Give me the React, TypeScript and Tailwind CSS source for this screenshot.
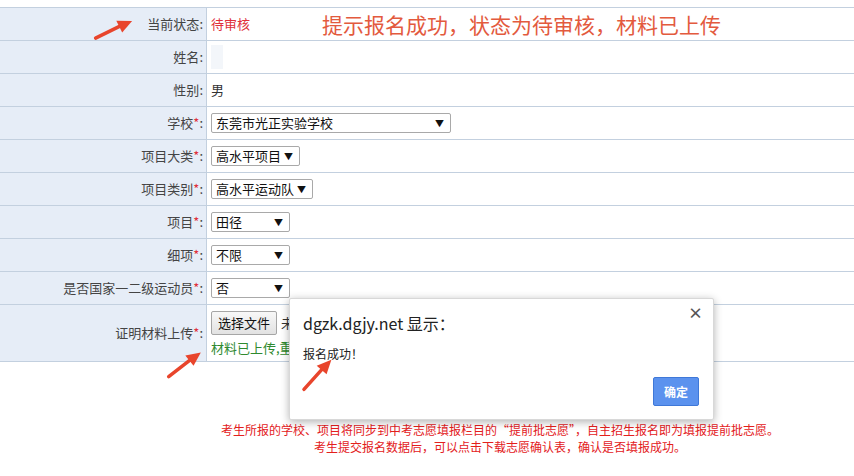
import React from "react";

const font = { fontFamily: '"Noto Sans CJK SC", "Noto Sans", sans-serif' };

function Arrow({ className, rotate }: { className: string; rotate: number }) {
  return (
    <svg className={className} viewBox="0 0 44 20" width="44" height="20" style={{ transform: `rotate(${rotate}deg)` }}>
      <path d="M2 12 L30 8" stroke="#e8452c" strokeWidth="3.5" strokeLinecap="round" fill="none" />
      <path d="M27 2 L42 7 L29 15 Z" fill="#e8452c" />
    </svg>
  );
}

function Select({ w, text }: { w: string; text: string }) {
  return (
    <div className={`${w} h-[20px] border border-[#a9a9a9] rounded-[2px] bg-white flex items-center justify-between pl-[4px] pr-[6px] text-[13px] text-[#111]`}>
      <span>{text}</span>
      <span className="text-[9px] leading-none">▼</span>
    </div>
  );
}

function Row({ label, req, children, h = "h-[33px]" }: { label: string; req?: boolean; children?: React.ReactNode; h?: string }) {
  return (
    <div className={`grid grid-cols-[207px_1fr] ${h} border-b border-[#c3d0df]`}>
      <div className="bg-[#e6edf7] border-r border-[#c3d0df] flex items-center justify-end pr-[3px] text-[13px] text-[#444]">
        {label}
        {req && <span className="text-[#e0303a]">*</span>}
        <span>:</span>
      </div>
      <div className="flex items-center pl-[4px] bg-white">{children}</div>
    </div>
  );
}

export default function App() {
  return (
    <div className="relative w-[854px] h-[476px] bg-white overflow-hidden" style={font}>
      <div className="pt-[7px]">
        <div className="border-t border-[#c3d0df]">
          <Row label="当前状态">
            <span className="text-[13px] text-[#e0303a]">待审核</span>
            <span className="ml-[72px] text-[21px] text-[#e35a3e] leading-none whitespace-nowrap">提示报名成功，状态为待审核，材料已上传</span>
          </Row>
          <Row label="姓名">
            <div className="w-[12px] h-[24px] bg-[#f3f6fa]" />
          </Row>
          <Row label="性别">
            <span className="text-[13px] text-[#333]">男</span>
          </Row>
          <Row label="学校" req>
            <Select w="w-[240px]" text="东莞市光正实验学校" />
          </Row>
          <Row label="项目大类" req>
            <Select w="w-[89px]" text="高水平项目" />
          </Row>
          <Row label="项目类别" req>
            <Select w="w-[102px]" text="高水平运动队" />
          </Row>
          <Row label="项目" req>
            <Select w="w-[79px]" text="田径" />
          </Row>
          <Row label="细项" req>
            <Select w="w-[79px]" text="不限" />
          </Row>
          <Row label="是否国家一二级运动员" req>
            <Select w="w-[79px]" text="否" />
          </Row>
          <Row label="证明材料上传" req h="h-[57px]">
            <div className="w-[80px] overflow-hidden whitespace-nowrap flex flex-col gap-[3px] pt-[2px]">
              <div className="flex items-center gap-[4px]">
                <div className="shrink-0 h-[24px] px-[6px] border border-[#a6a6a6] rounded-[2px] bg-gradient-to-b from-[#f8f8f8] to-[#e2e2e2] flex items-center text-[13px] text-[#111]">选择文件</div>
                <span className="text-[13px] text-[#333]">未选择任何文件</span>
              </div>
              <span className="text-[13px] text-[#2f8a2f]">材料已上传,重新上传将覆盖</span>
            </div>
          </Row>
        </div>
        <div className="pl-[146px] pt-[59px] text-center text-[12px] leading-[17px] text-[#e3201c]">
          <div>考生所报的学校、项目将同步到中考志愿填报栏目的“提前批志愿”，自主招生报名即为填报提前批志愿。</div>
          <div>考生提交报名数据后，可以点击下载志愿确认表，确认是否填报成功。</div>
        </div>
      </div>

      {/* dialog */}
      <div className="absolute left-[289px] top-[298px] w-[425px] h-[122px] bg-white rounded-[2px] border border-[#d8d8d8] shadow-[0_2px_8px_rgba(0,0,0,0.3)]">
        <div className="absolute right-[10px] top-[6px] text-[15px] text-[#555] font-bold leading-none">×</div>
        <div className="pl-[13px] pt-[14px] text-[16px] text-[#222] leading-[20px]">dgzk.dgjy.net 显示：</div>
        <div className="pl-[13px] pt-[12px] text-[12px] text-[#222]">报名成功！</div>
        <div className="absolute right-[14px] bottom-[13px] w-[46px] h-[29px] bg-[#5b92ee] border border-[#3f78d8] rounded-[2px] flex items-center justify-center text-[12px] text-white font-bold">确定</div>
      </div>

      <Arrow className="absolute left-[92px] top-[20px]" rotate={-18} />
      <Arrow className="absolute left-[163px] top-[355px]" rotate={-30} />
      <Arrow className="absolute left-[296px] top-[365px]" rotate={-40} />
    </div>
  );
}
